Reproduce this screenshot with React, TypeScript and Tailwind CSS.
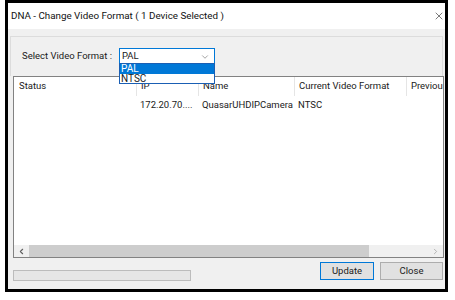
import { X, ChevronDown, ChevronLeft, ChevronRight } from "lucide-react";

const font = { fontFamily: 'Roboto, "Liberation Sans", sans-serif' };

function Header() {
  return (
    <div className="flex h-[19px] items-center text-[9.5px] text-[#1a1a1a] whitespace-nowrap">
      <div className="w-[122px] pl-[5px] h-full flex items-center">Status</div>
      <div className="w-[62px] pl-[4px] h-full flex items-center border-l border-[#e5e5e5]">IP</div>
      <div className="w-[96px] pl-[4px] h-full flex items-center border-l border-[#e5e5e5]">Name</div>
      <div className="w-[112px] pl-[4px] h-full flex items-center border-l border-[#e5e5e5]">Current Video Format</div>
      <div className="flex-1 pl-[4px] h-full flex items-center border-l border-[#e5e5e5] overflow-hidden">Previous</div>
    </div>
  );
}

function Row() {
  return (
    <div className="flex h-[16px] mt-[1px] items-center text-[9.5px] text-[#1a1a1a] whitespace-nowrap">
      <div className="w-[122px] pl-[5px]"></div>
      <div className="w-[62px] pl-[4px] overflow-hidden">172.20.70....</div>
      <div className="w-[96px] pl-[4px] overflow-hidden">QuasarUHDIPCamera</div>
      <div className="w-[112px] pl-[4px]">NTSC</div>
      <div className="flex-1"></div>
    </div>
  );
}

export default function App() {
  return (
    <div className="w-[455px] h-[300px] bg-white" style={font}>
      <div className="ml-[5px] w-[443px] h-[292px] border-[3px] border-black flex flex-col">
        <div className="h-[26px] bg-white flex items-center justify-between pl-[3px] pr-0">
          <span className="text-[9.8px] text-[#111] whitespace-nowrap">DNA - Change Video Format ( 1 Device Selected )</span>
          <X size={12} strokeWidth={1.2} className="text-[#222]" />
        </div>
        <div className="relative flex-1 bg-[#f0f0f0] flex flex-col">
          <div className="mt-[7px] mx-[2px] h-[40px] border-t border-x border-[#dcdcdc] flex items-center pl-[11px] text-[9.5px] text-[#1a1a1a] whitespace-nowrap">
            <div className="w-[97px]">Select Video Format :</div>
            <div className="w-[96px] h-[17px] border border-[#0078d7] bg-white flex items-center justify-between pl-[2px] pr-[4px]">
              <span>PAL</span>
              <ChevronDown size={10} strokeWidth={1.3} className="text-[#555]" />
            </div>
          </div>
          <div className="ml-[5px] w-[431px] h-[182px] border border-[#828282] bg-white flex flex-col">
            <Header />
            <Row />
            <div className="flex-1"></div>
            <div className="h-[12px] bg-[#f0f0f0] flex items-center">
              <ChevronLeft size={9} strokeWidth={3} className="mx-[3px] text-[#606060]" />
              <div className="w-[340px] h-full bg-[#cdcdcd]"></div>
              <div className="flex-1"></div>
              <ChevronRight size={9} strokeWidth={2} className="mx-[3px] text-[#a0a0a0]" />
            </div>
          </div>
          <div className="flex-1 flex pl-[5px] pr-[2px]">
            <div className="mt-[12px] w-[178px] h-[11px] border border-[#bcbcbc] bg-[#e6e6e6]"></div>
            <div className="flex-1"></div>
            <button className="mt-[4px] w-[54px] h-[18px] border border-[#0078d7] bg-[#e1e1e1] text-[9.5px] text-[#1a1a1a] flex items-center justify-center">Update</button>
            <button className="mt-[4px] ml-[6px] w-[63px] h-[18px] border border-[#adadad] bg-[#e1e1e1] text-[9.5px] text-[#1a1a1a] flex items-center justify-center">Close</button>
          </div>
          <div className="absolute left-[111px] top-[34px] w-[96px] h-[21px] border border-[#1a5fb4] bg-white text-[10px] leading-[9.5px]">
            <div className="h-[9.5px] bg-[#0078d7] text-white pl-[1px]">PAL</div>
            <div className="h-[9.5px] text-[#1a1a1a] pl-[1px]">NTSC</div>
          </div>
        </div>
      </div>
    </div>
  );
}
